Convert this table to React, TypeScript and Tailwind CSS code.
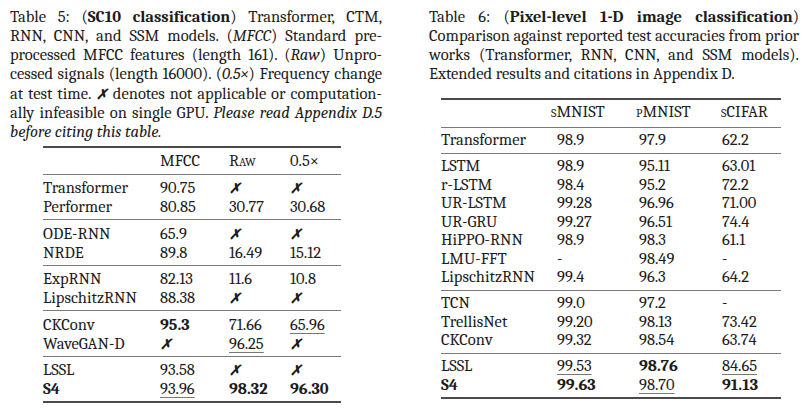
const X = "✗";

// "**" = bold, "_" = underlined, "x" = not applicable mark
const Val = ({ v }: { v: string }) => {
  if (v === "x") return <span className="font-sans font-bold italic text-[14px]">{X}</span>;
  if (v.startsWith("**")) return <span className="font-bold">{v.slice(2)}</span>;
  if (v.startsWith("_"))
    return (
      <span className="underline decoration-[#777] decoration-1 underline-offset-[3px]">{v.slice(1)}</span>
    );
  return <span>{v}</span>;
};

const sc10 = [
  [
    ["Transformer", "90.75", "x", "x"],
    ["Performer", "80.85", "30.77", "30.68"],
  ],
  [
    ["ODE-RNN", "65.9", "x", "x"],
    ["NRDE", "89.8", "16.49", "15.12"],
  ],
  [
    ["ExpRNN", "82.13", "11.6", "10.8"],
    ["LipschitzRNN", "88.38", "x", "x"],
  ],
  [
    ["CKConv", "**95.3", "71.66", "_65.96"],
    ["WaveGAN-D", "x", "_96.25", "x"],
  ],
  [
    ["LSSL", "93.58", "x", "x"],
    ["**S4", "_93.96", "**98.32", "**96.30"],
  ],
];

const pixel = [
  [["Transformer", "98.9", "97.9", "62.2"]],
  [
    ["LSTM", "98.9", "95.11", "63.01"],
    ["r-LSTM", "98.4", "95.2", "72.2"],
    ["UR-LSTM", "99.28", "96.96", "71.00"],
    ["UR-GRU", "99.27", "96.51", "74.4"],
    ["HiPPO-RNN", "98.9", "98.3", "61.1"],
    ["LMU-FFT", "-", "98.49", "-"],
    ["LipschitzRNN", "99.4", "96.3", "64.2"],
  ],
  [
    ["TCN", "99.0", "97.2", "-"],
    ["TrellisNet", "99.20", "98.13", "73.42"],
    ["CKConv", "99.32", "98.54", "63.74"],
  ],
  [
    ["LSSL", "_99.53", "**98.76", "_84.65"],
    ["**S4", "**99.63", "_98.70", "**91.13"],
  ],
];

const Line = ({ children, last }: { children: React.ReactNode; last?: boolean }) => (
  <div
    className={
      last
        ? "whitespace-nowrap h-[19.3px] leading-[19.3px]"
        : "whitespace-nowrap h-[19.3px] leading-[19.3px] text-justify [text-align-last:justify]"
    }
  >
    {children}
  </div>
);

export default function App() {
  return (
    <div className="w-[806px] h-[416px] bg-white text-[#1c1c1c] font-serif text-[16.5px] flex overflow-hidden">
      {/* Table 5 */}
      <div className="w-[372px] ml-[10px] pt-[6.5px] shrink-0">
        <div>
          <Line>
            Table 5: (<b>SC10 classification</b>) Transformer, CTM,
          </Line>
          <Line>
            RNN, CNN, and SSM models. (<i>MFCC</i>) Standard pre-
          </Line>
          <Line>
            processed MFCC features (length 161). (<i>Raw</i>) Unpro-
          </Line>
          <Line>
            cessed signals (length 16000). (<i>0.5×</i>) Frequency change
          </Line>
          <Line>
            at test time. <span className="font-sans font-bold italic text-[14px]">{X}</span> denotes not applicable or computation-
          </Line>
          <Line>
            ally infeasible on single GPU. <i>Please read Appendix D.5</i>
          </Line>
          <Line last>
            <i>before citing this table.</i>
          </Line>
        </div>

        <div className="ml-[33px] w-[298px] mt-[4px]">
          <div className="h-[2px] bg-[#4a4a4a]" />
          <div className="grid grid-cols-[117px_69px_61px_51px] pt-[3px] pb-[4px] h-[26px] leading-[19px]">
            <span />
            <span>MFCC</span>
            <span className="[font-variant-caps:small-caps]">Raw</span>
            <span>0.5×</span>
          </div>
          {sc10.map((g, gi) => (
            <div key={gi}>
              <div className="h-[1px] bg-[#7a7a7a]" />
              <div className="pt-[3.5px] pb-[3px]">
                {g.map((r, ri) => (
                  <div key={ri} className="grid grid-cols-[117px_69px_61px_51px] h-[19px] leading-[19px]">
                    {r.map((c, ci) => (
                      <Val key={ci} v={c} />
                    ))}
                  </div>
                ))}
              </div>
            </div>
          ))}
          <div className="h-[2px] bg-[#4a4a4a]" />
        </div>
      </div>

      {/* Table 6 */}
      <div className="w-[370px] ml-[47px] pt-[6.5px] shrink-0">
        <div>
          <Line>
            Table 6: (<b>Pixel-level 1-D image classification</b>)
          </Line>
          <Line>Comparison against reported test accuracies from prior</Line>
          <Line>works (Transformer, RNN, CNN, and SSM models).</Line>
          <Line last>Extended results and citations in Appendix D.</Line>
        </div>

        <div className="ml-[12px] w-[340px] mt-[14.5px]">
          <div className="h-[2px] bg-[#4a4a4a]" />
          <div className="grid grid-cols-[116px_82px_83px_59px] pt-[3px] pb-[5px] h-[26.5px] leading-[18.5px] [font-variant-caps:small-caps]">
            <span />
            <span className="-ml-[6px]">sMNIST</span>
            <span className="-ml-[3px]">pMNIST</span>
            <span className="-ml-[1px]">sCIFAR</span>
          </div>
          {pixel.map((g, gi) => (
            <div key={gi}>
              <div className="h-[1px] bg-[#7a7a7a]" />
              <div className="pt-[3.5px] pb-[3px]">
                {g.map((r, ri) => (
                  <div key={ri} className="grid grid-cols-[116px_82px_83px_59px] h-[18.5px] leading-[18.5px]">
                    {r.map((c, ci) => (
                      <Val key={ci} v={c} />
                    ))}
                  </div>
                ))}
              </div>
            </div>
          ))}
          <div className="h-[2px] bg-[#4a4a4a]" />
        </div>
      </div>
    </div>
  );
}
